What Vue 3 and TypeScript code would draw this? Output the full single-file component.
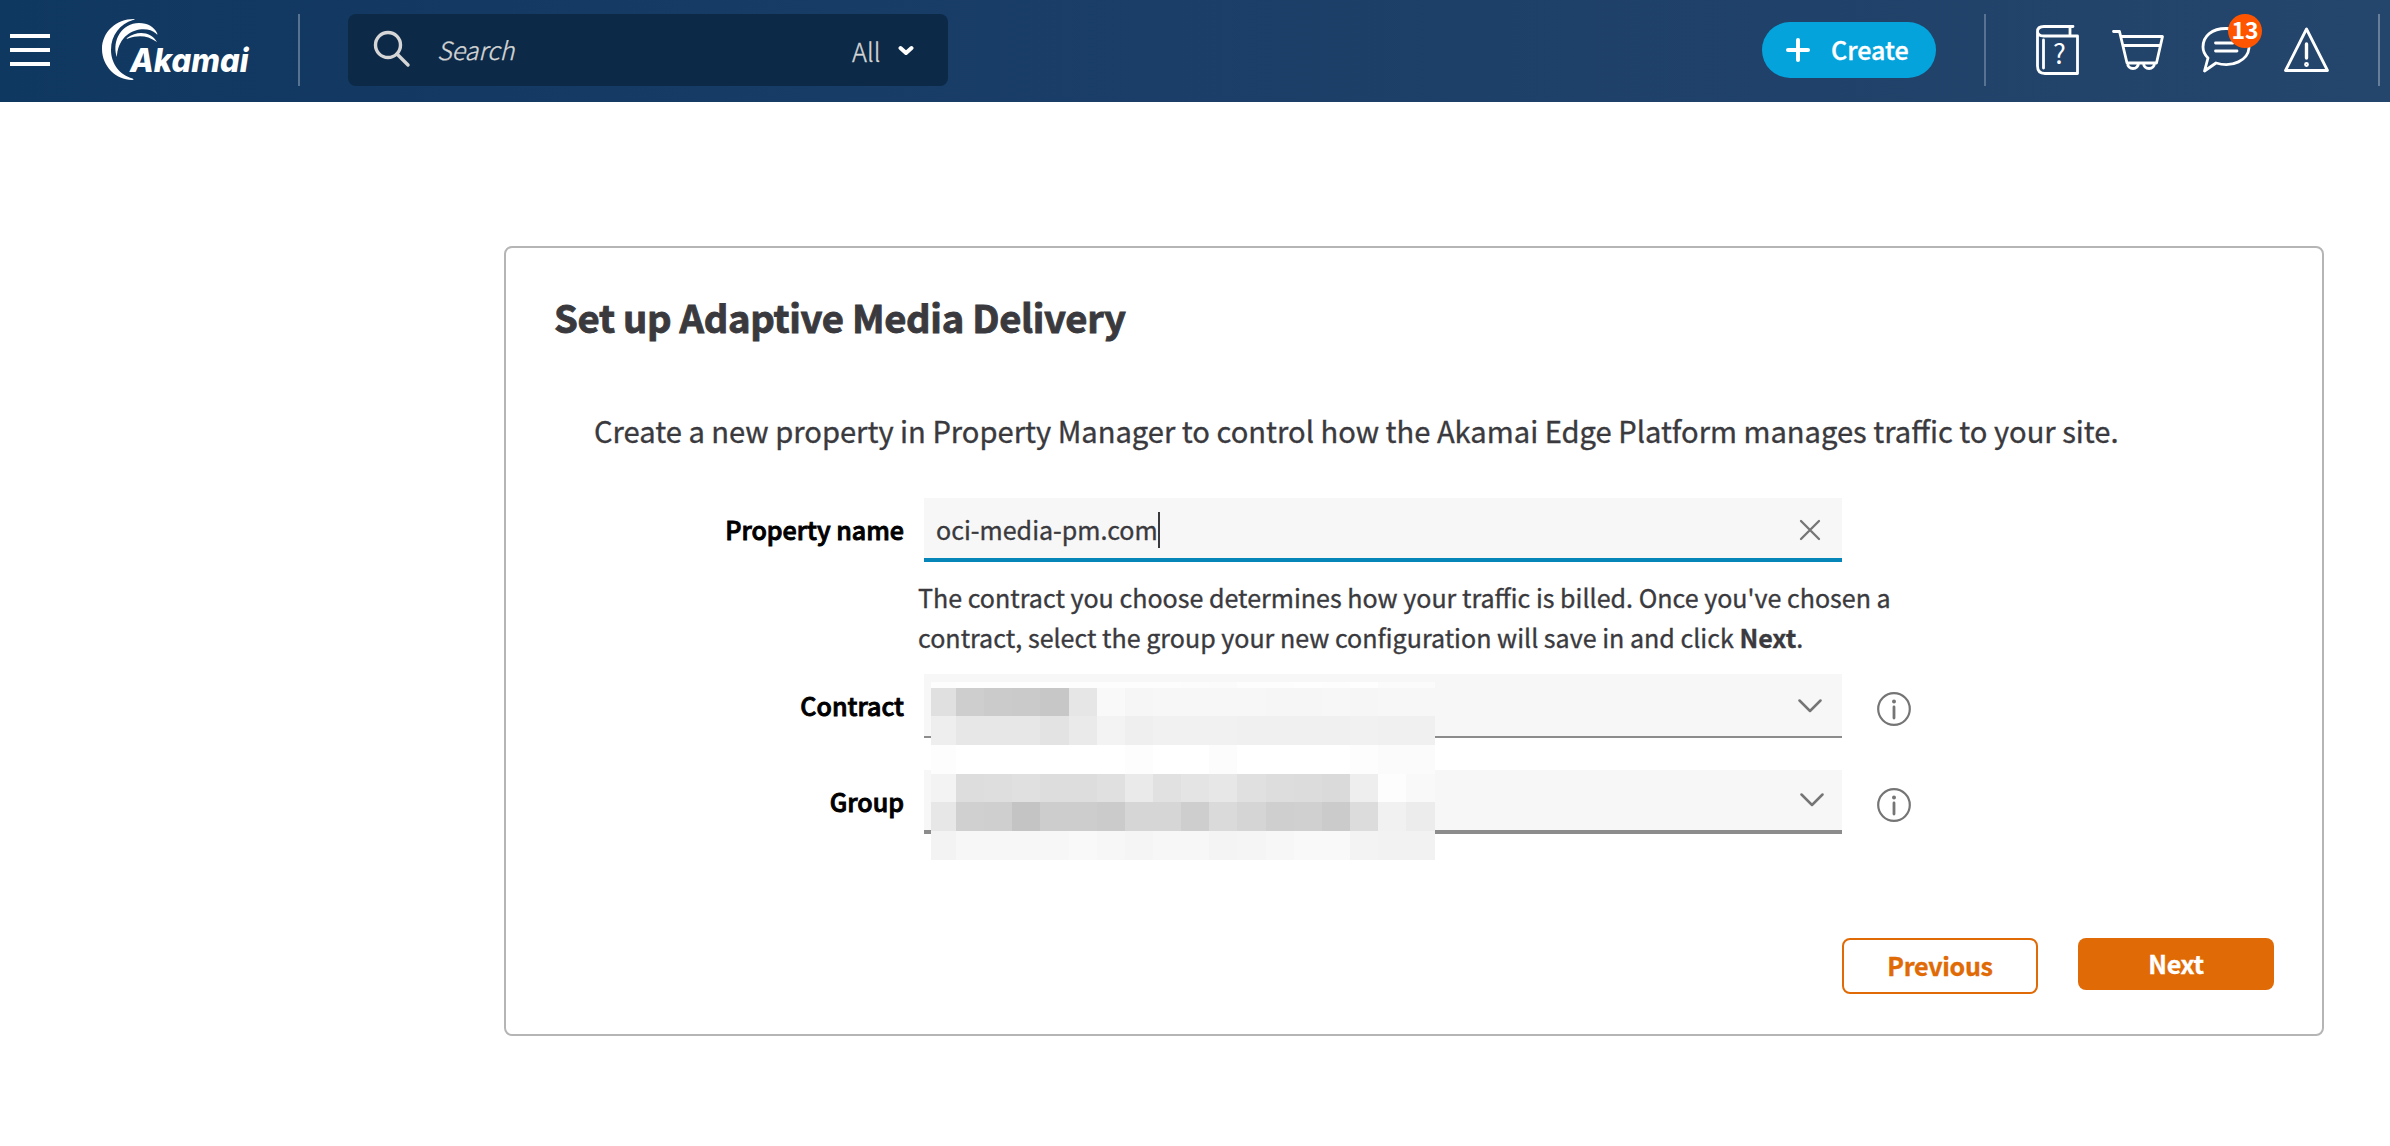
<script setup lang="ts">
interface Row { h: number; cells: string[] }

const grey = (levels: number[]): string[] => levels.map((v) => `rgb(${v},${v},${v})`)

const columns = '25px repeat(16, 28.15px) 1fr'
const mosaic: Row[] = [
  { h: 5.5, cells: grey([253, 254, 254, 254, 254, 253, 253, 253, 253, 252, 251, 253, 253, 254, 253, 254, 251, 251]) },
  { h: 28.5, cells: grey([224, 206, 203, 202, 199, 230, 249, 246, 247, 247, 247, 247, 246, 246, 247, 246, 247, 247]) },
  { h: 29, cells: grey([238, 231, 231, 231, 227, 234, 243, 239, 241, 241, 241, 240, 240, 240, 240, 241, 240, 240]) },
  { h: 28.5, cells: grey([253, 255, 255, 255, 255, 255, 255, 253, 255, 255, 252, 255, 255, 255, 255, 253, 251, 251]) },
  { h: 28.5, cells: grey([243, 221, 222, 224, 221, 221, 224, 234, 225, 228, 231, 224, 221, 220, 218, 238, 253, 249]) },
  { h: 29, cells: grey([231, 208, 207, 196, 205, 205, 203, 214, 214, 206, 218, 213, 207, 208, 203, 220, 241, 236]) },
  { h: 29, cells: grey([243, 247, 247, 247, 247, 249, 247, 245, 247, 247, 244, 245, 247, 249, 249, 243, 242, 242]) },
]
</script>

<template>
  <div class="page">
    <header class="bar">
      <button class="menu" aria-label="Menu"><i /><i /><i /></button>
      <svg class="logo" width="150" height="64" viewBox="0 0 150 64">
        <path fill="#fff" d="M32 1C14 1 0 14 0 31C0 48 14 62 30 62C32 62 32 61 30.500 60.500C18 57 9 46 9 32C9 17 18 6 31 2C33 1.500 33 1 32 1Z" />
        <path fill="#fff" d="M14.500 38C10 22 20 5 37 5C46 5 52 9 55 15C56 17 55 17 54 15.500C45 7 18 10 15 37C15 39 14.800 39 14.500 38Z" />
        <path fill="#fff" d="M25 20C36 12 49 14 55 24C45 17 36 17 26 20.500C24.500 21 24.500 20.500 25 20Z" />
        <text x="28" y="54" textLength="118.500" lengthAdjust="spacingAndGlyphs">Akamai</text>
      </svg>
      <i class="rule" />
      <div class="search">
        <svg width="40" height="40" viewBox="0 0 40 40" fill="none" stroke="#d6d6d6" stroke-width="3.400" stroke-linecap="round">
          <circle cx="15" cy="15" r="12.500" /><path d="M24 24L35 35" />
        </svg>
        <span class="placeholder">Search</span>
        <span class="scope">All</span>
        <svg class="caretdown" width="16" height="12" viewBox="0 0 16 12" fill="none" stroke="#fff" stroke-width="4" stroke-linecap="round" stroke-linejoin="round">
          <path d="M2.500 3L8 8L13.500 3" />
        </svg>
      </div>
      <button class="create">
        <svg width="24" height="24" viewBox="0 0 24 24" stroke="#fff" stroke-width="4" stroke-linecap="round"><path d="M12 2V22M2 12H22" /></svg>
        <span>Create</span>
      </button>
      <i class="rule second" />
      <svg class="tools" width="300" height="60" viewBox="2032 20 300 60" fill="none" stroke="#fff" stroke-width="2.800" stroke-linecap="round" stroke-linejoin="round">
        <path d="M2073 26.500H2044Q2037.500 26.500 2037.500 31.500Q2037.500 36 2044 36H2077.500V73.500H2045Q2037.500 73.500 2037.500 66V32M2070 27V36M2043.500 40V68" />
        <text class="q" x="2059.500" y="64" text-anchor="middle">?</text>
        <path d="M2113.500 31.500H2119.500L2127 63H2156.500L2162.500 36.500H2121M2123 45.500H2160.500M2127.500 63A5.500 5.500 0 0 0 2138.500 63M2143.500 63A5.500 5.500 0 0 0 2154.500 63" />
        <path d="M2226 28.500C2212 28.500 2203 36 2203 47Q2203 53 2208 58L2204.500 71L2216 63C2233 68 2248 60 2249 48C2249 36 2241 28.500 2226 28.500ZM2215.500 43H2233M2215.500 51H2237" />
        <path d="M2306.500 29L2285.500 70.500H2327.500Z" />
        <path d="M2306.500 44V58" stroke-width="3.400" />
        <circle cx="2306.500" cy="64.500" r="1" />
        <circle cx="2245" cy="31" r="17" fill="#ff5500" stroke="none" />
        <text class="count" x="2245" y="39" text-anchor="middle">13</text>
      </svg>
      <i class="rule third" />
    </header>

    <main class="card">
      <h1>Set up Adaptive Media Delivery</h1>
      <p class="intro">Create a new property in Property Manager to control how the Akamai Edge Platform manages traffic to your site.</p>

      <div class="line name">
        <label>Property name</label>
        <div class="field active">
          <span class="value">oci-media-pm.com</span><i class="caret" />
          <svg width="22" height="22" viewBox="0 0 22 22" stroke="#757575" stroke-width="2.300" stroke-linecap="round"><path d="M2 2L20 20M20 2L2 20" /></svg>
        </div>
      </div>
      <p class="help"><span>The contract you choose determines how your traffic is billed. Once you've chosen a</span><br /><span>contract, select the group your new configuration will save in and click <b>Next</b>.</span></p>

      <div class="selects">
        <div v-for="name in ['Contract', 'Group']" :key="name" class="line" :class="name.toLowerCase()">
          <label>{{ name }}</label>
          <div class="field">
            <svg width="24" height="14" viewBox="0 0 24 14" fill="none" stroke="#757575" stroke-width="2.500" stroke-linecap="round" stroke-linejoin="round"><path d="M1.500 1.500L12 12L22.500 1.500" /></svg>
          </div>
          <svg class="info" width="34" height="34" viewBox="0 0 34 34" fill="none" stroke="#757575" stroke-width="2.200">
            <circle cx="17" cy="17" r="15.800" /><path d="M17 15V26" stroke-width="2.800" stroke-linecap="round" /><circle cx="17" cy="9.500" r="2" fill="#757575" stroke="none" />
          </svg>
        </div>
        <div class="mosaic">
          <div v-for="(row, r) in mosaic" :key="r" class="mrow" :style="{ height: row.h + 'px', gridTemplateColumns: columns }">
            <i v-for="(c, k) in row.cells" :key="k" :style="{ background: c }" />
          </div>
        </div>
      </div>

      <div class="actions">
        <button class="prev">Previous</button>
        <button class="next">Next</button>
      </div>
    </main>
  </div>
</template>

<style>
body { margin: 0; background: #fff; }
</style>

<style scoped>
* { box-sizing: border-box; }
.page { width: 2390px; height: 1146px; overflow: hidden; background: #fff; color: #3a3a3e; font-family: "Noto Sans CJK SC", "Noto Sans", sans-serif; font-size: 25.06px; -webkit-text-stroke-width: .35px; }
button { border: 0; padding: 0; background: none; font-family: inherit; font-size: inherit; }
.bar { height: 102px; display: flex; align-items: flex-start; background: linear-gradient(90deg, #0f3860 0%, #133963 15%, #173c66 35%, #20426a 75%, #24466c 100%); }
.menu { width: 40px; margin: 34px 0 0 10px; display: flex; flex-direction: column; gap: 10px; }
.menu i { height: 4px; background: #fff; }
.logo { margin: 18px 0 0 52px; overflow: visible; }
.logo text { font: italic 800 33px Inter, sans-serif; fill: #fff; }
.rule { width: 2px; height: 72px; margin: 14px 0 0 46px; background: #587291; }
.search { width: 600px; height: 72px; margin: 14px 0 0 48px; border-radius: 8px; background: #0c2a48; color: #d6d6d6; display: flex; align-items: flex-start; padding: 16px 34px 0 25px; font-weight: 300; }
.placeholder { margin-left: 24px; font-style: italic; line-height: 38px; width: 415px; }
.scope { line-height: 42px; width: 46px; font-size: 25.4px; }
.caretdown { margin-top: 15px; }
.create { width: 174px; height: 56px; margin: 22px 0 0 814px; border-radius: 28px; background: #05a3dc; color: #fff; display: flex; align-items: center; padding-left: 24px; font-weight: 500; }
.create span { margin: -2px 0 0 21px; line-height: 36px; }
.rule.second { margin-left: 48px; }
.tools { margin: 20px 0 0 46px; overflow: visible; }
.tools .q { font: 400 27px "Noto Sans CJK SC", sans-serif; fill: #fff; stroke: none; }
.tools .count { font: 700 23px "Noto Sans CJK SC", sans-serif; fill: #fff; stroke: none; }
.rule.third { margin-left: 46px; background: #687f99; }

.card { width: 1820px; height: 790px; margin: 144px 0 0 504px; border: 2px solid #b5b5b5; border-radius: 8px; }
h1 { margin: 39px 0 0 48px; font-size: 38.2px; line-height: 60px; font-weight: 700; letter-spacing: -.33px; white-space: nowrap; -webkit-text-stroke-width: .9px; }
.intro { margin: 61px 0 0 88px; font-size: 29.13px; line-height: 44px; white-space: nowrap; }
.line { display: flex; height: 64px; }
.line.name { margin-top: 46px; }
label { width: 398px; text-align: right; color: #000; font-weight: 500; line-height: 62px; -webkit-text-stroke-width: .9px; }
.field { width: 918px; height: 64px; margin-left: 20px; background: #f7f7f7; display: flex; align-items: flex-start; padding-left: 12px; border-bottom: 2px solid #8c8c8c; }
.field.active { border-bottom: 4px solid #0685b9; }
.value { line-height: 62px; }
.caret { width: 2px; height: 36px; margin-top: 14px; background: #3a3a3e; }
.field svg { margin: 25px 20px 0 auto; }
.active svg { margin-top: 21px; margin-right: 21px; }
.group .field { border-bottom-width: 4px; }
.group .field svg { margin: 23px 18px 0 auto; }
.help { margin: 15px 0 0 412px; line-height: 40px; white-space: nowrap; }
.selects { position: relative; display: flex; flex-direction: column; gap: 32px; margin-top: 17px; }
.info { margin: 18px 0 0 35px; }
.mosaic { position: absolute; left: 425px; top: 8px; width: 504px; height: 178px; }
.mrow { display: grid; }
.actions { display: flex; justify-content: flex-end; gap: 40px; margin: 104px 48px 0 0; }
.actions button { width: 196px; border-radius: 8px; font-weight: 700; letter-spacing: -.3px; padding-bottom: 2px; }
.prev { height: 56px; border: 2px solid #e06a05; color: #e06a05; }
.next { height: 52px; background: #e06a05; color: #fff; }
</style>
